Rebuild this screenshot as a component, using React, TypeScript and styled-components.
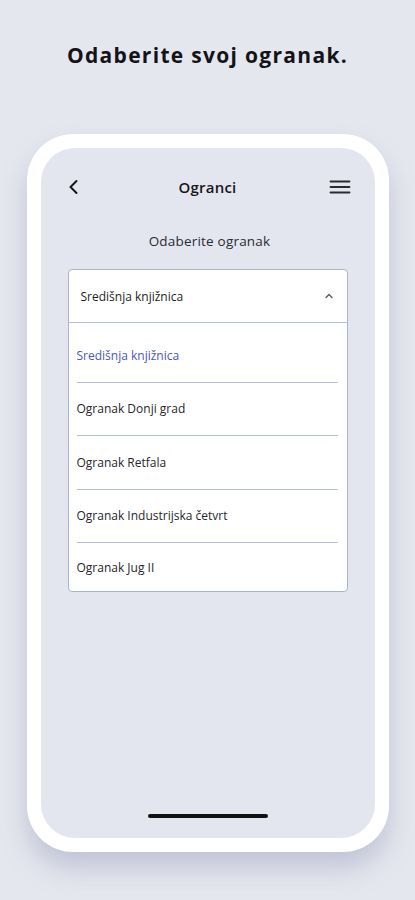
import React from "react";
import styled, { createGlobalStyle } from "styled-components";

const Global = createGlobalStyle`
  html, body { margin: 0; padding: 0; background: #e5e7ef; }
  body { font-family: "Open Sans", "Noto Sans", sans-serif; }
  * { box-sizing: border-box; }
`;

const Page = styled.div`
  width: 415px;
  height: 900px;
  background: #e5e7ef;
  display: flex;
  flex-direction: column;
  align-items: center;
  overflow: hidden;
`;

const Heading = styled.h1`
  margin: 40px 0 0;
  font-size: 21px;
  font-weight: 700;
  color: #141418;
  letter-spacing: 1.3px;
  line-height: 30px;
`;

const Phone = styled.div`
  margin-top: 64px;
  width: 362px;
  height: 718px;
  background: #ffffff;
  border-radius: 46px;
  padding: 14px;
  box-shadow: 0 16px 26px rgba(140, 146, 172, 0.4);
  display: flex;
`;

const Screen = styled.div`
  flex: 1;
  background: #e4e6ef;
  border-radius: 34px;
  display: flex;
  flex-direction: column;
  align-items: stretch;
  padding: 0 23px 0 27px;
`;

const NavBar = styled.div`
  height: 76px;
  padding-top: 2px;
  display: flex;
  align-items: center;
  justify-content: space-between;
`;

const NavTitle = styled.div`
  font-size: 15px;
  font-weight: 600;
  color: #16161a;
  letter-spacing: 0.2px;
`;

const IconBox = styled.div`
  width: 24px;
  height: 24px;
  display: flex;
  align-items: center;
  justify-content: center;
`;

const Label = styled.div`
  margin-top: 7px;
  text-align: center;
  font-size: 13.5px;
  letter-spacing: 0.2px;
  color: #2a2a30;
  line-height: 20px;
`;

const Select = styled.div`
  margin: 18px 0 0 0;
  width: 280px;
  background: #ffffff;
  border: 1px solid #a9b3de;
  border-radius: 4px;
  display: flex;
  flex-direction: column;
`;

const SelectHead = styled.div`
  height: 53px;
  border-bottom: 1px solid #b6bfe3;
  display: flex;
  align-items: center;
  justify-content: space-between;
  padding: 0 12px 0 12px;
  font-size: 12px;
  color: #1e1e24;
`;

const List = styled.div`
  padding: 6px 9px 0 8px;
  display: flex;
  flex-direction: column;
`;

const Item = styled.div<{ $active?: boolean; $last?: boolean }>`
  height: ${(p) => (p.$last ? "48px" : "53.5px")};
  display: flex;
  align-items: center;
  font-size: 12px;
  color: ${(p) => (p.$active ? "#4657c9" : "#26262c")};
  border-bottom: ${(p) => (p.$last ? "none" : "1px solid #b3bbdf")};
`;

const Spacer = styled.div`
  flex: 1;
`;

const HomeBar = styled.div`
  align-self: center;
  width: 120px;
  height: 4px;
  border-radius: 2px;
  background: #111114;
  margin-bottom: 20px;
  margin-left: -4px;
`;

const items = [
  "Središnja knjižnica",
  "Ogranak Donji grad",
  "Ogranak Retfala",
  "Ogranak Industrijska četvrt",
  "Ogranak Jug II",
];

export default function App() {
  return (
    <Page>
      <Global />
      <Heading>Odaberite svoj ogranak.</Heading>
      <Phone>
        <Screen>
          <NavBar>
            <IconBox style={{ marginLeft: -6 }}>
              <svg width="24" height="24" viewBox="0 0 24 24" fill="none">
                <path d="M14.5 6 L8.5 12 L14.5 18" stroke="#16161a" strokeWidth="2" strokeLinecap="round" strokeLinejoin="round" />
              </svg>
            </IconBox>
            <NavTitle>Ogranci</NavTitle>
            <IconBox style={{ width: 22 }}>
              <svg width="22" height="16" viewBox="0 0 22 16" fill="none">
                <path d="M1.5 2.5 H20.5 M1.5 8 H20.5 M1.5 13.5 H20.5" stroke="#2a2a30" strokeWidth="1.8" strokeLinecap="round" />
              </svg>
            </IconBox>
          </NavBar>
          <Label>Odaberite ogranak</Label>
          <Select>
            <SelectHead>
              <span>Središnja knjižnica</span>
              <svg width="12" height="12" viewBox="0 0 12 12" fill="none">
                <path d="M3 7.5 L6 4.5 L9 7.5" stroke="#55555c" strokeWidth="1.3" strokeLinecap="round" strokeLinejoin="round" />
              </svg>
            </SelectHead>
            <List>
              {items.map((t, i) => (
                <Item key={t} $active={i === 0} $last={i === items.length - 1}>
                  {t}
                </Item>
              ))}
            </List>
          </Select>
          <Spacer />
          <HomeBar />
        </Screen>
      </Phone>
    </Page>
  );
}
